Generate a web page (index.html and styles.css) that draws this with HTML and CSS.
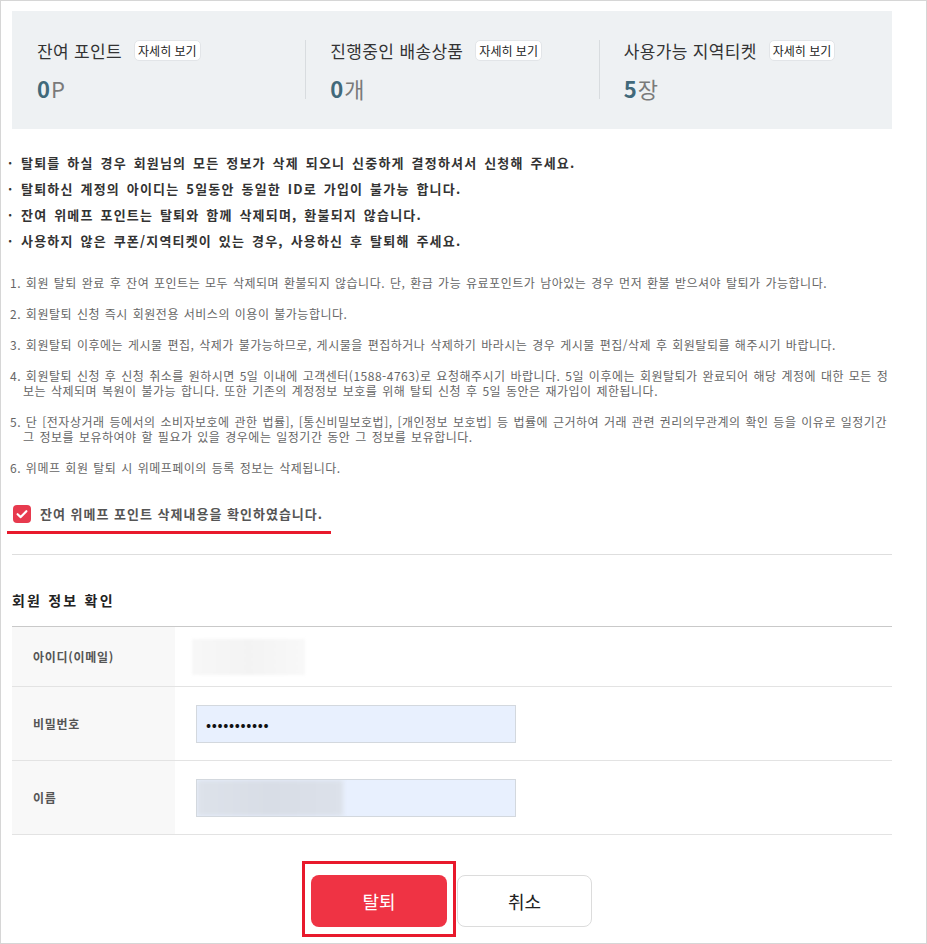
FILE: index.html
```html
<!DOCTYPE html>
<html lang="ko">
<head>
<meta charset="utf-8">
<title>회원 탈퇴</title>
<link rel="stylesheet" href="styles.css">
</head>
<body>
<div class="frame">
  <div class="main">
    <section class="summary">
      <div class="sum-col first">
        <div class="sum-title"><span>잔여 포인트</span><button class="badge">자세히 보기</button></div>
        <div class="sum-value"><strong>0</strong><span>P</span></div>
      </div>
      <div class="sum-col">
        <div class="sum-title"><span>진행중인 배송상품</span><button class="badge">자세히 보기</button></div>
        <div class="sum-value"><strong>0</strong><span>개</span></div>
      </div>
      <div class="sum-col">
        <div class="sum-title"><span>사용가능 지역티켓</span><button class="badge">자세히 보기</button></div>
        <div class="sum-value"><strong>5</strong><span>장</span></div>
      </div>
    </section>

    <ul class="notice">
      <li>탈퇴를 하실 경우 회원님의 모든 정보가 삭제 되오니 신중하게 결정하셔서 신청해 주세요.</li>
      <li>탈퇴하신 계정의 아이디는 5일동안 동일한 ID로 가입이 불가능 합니다.</li>
      <li>잔여 위메프 포인트는 탈퇴와 함께 삭제되며, 환불되지 않습니다.</li>
      <li>사용하지 않은 쿠폰/지역티켓이 있는 경우, 사용하신 후 탈퇴해 주세요.</li>
    </ul>

    <ol class="terms">
      <li>1. 회원 탈퇴 완료 후 잔여 포인트는 모두 삭제되며 환불되지 않습니다. 단, 환급 가능 유료포인트가 남아있는 경우 먼저 환불 받으셔야 탈퇴가 가능합니다.</li>
      <li>2. 회원탈퇴 신청 즉시 회원전용 서비스의 이용이 불가능합니다.</li>
      <li>3. 회원탈퇴 이후에는 게시물 편집, 삭제가 불가능하므로, 게시물을 편집하거나 삭제하기 바라시는 경우 게시물 편집/삭제 후 회원탈퇴를 해주시기 바랍니다.</li>
      <li>4. 회원탈퇴 신청 후 신청 취소를 원하시면 5일 이내에 고객센터(1588-4763)로 요청해주시기 바랍니다. 5일 이후에는 회원탈퇴가 완료되어 해당 계정에 대한 모든 정보는 삭제되며 복원이 불가능 합니다. 또한 기존의 계정정보 보호를 위해 탈퇴 신청 후 5일 동안은 재가입이 제한됩니다.</li>
      <li>5. 단 [전자상거래 등에서의 소비자보호에 관한 법률], [통신비밀보호법], [개인정보 보호법] 등 법률에 근거하여 거래 관련 권리의무관계의 확인 등을 이유로 일정기간 그 정보를 보유하여야 할 필요가 있을 경우에는 일정기간 동안 그 정보를 보유합니다.</li>
      <li>6. 위메프 회원 탈퇴 시 위메프페이의 등록 정보는 삭제됩니다.</li>
    </ol>

    <label class="agree">
      <svg class="check" width="18" height="18" viewBox="0 0 18 18" aria-hidden="true">
        <rect x="0" y="0" width="18" height="18" rx="4" fill="#e73a4e"/>
        <path d="M4.6 9.2 L7.7 12.1 L13.4 6.2" fill="none" stroke="#fff" stroke-width="2.2" stroke-linecap="round" stroke-linejoin="round"/>
      </svg>
      <span>잔여 위메프 포인트 삭제내용을 확인하였습니다.</span>
    </label>

    <hr class="divider">

    <h2 class="info-title">회원 정보 확인</h2>

    <div class="info-table">
      <div class="info-row short">
        <div class="info-label">아이디(이메일)</div>
        <div class="info-value"><div class="blur-id"></div></div>
      </div>
      <div class="info-row">
        <div class="info-label">비밀번호</div>
        <div class="info-value"><div class="field"><span class="dots">•••••••••••</span></div></div>
      </div>
      <div class="info-row">
        <div class="info-label">이름</div>
        <div class="info-value"><div class="field"><div class="blur-name"></div></div></div>
      </div>
    </div>

    <div class="actions">
      <div class="highlight"><button class="btn-leave">탈퇴</button></div>
      <button class="btn-cancel">취소</button>
    </div>
  </div>
</div>
</body>
</html>
```

FILE: styles.css
```css
body {
  margin: 0;
  font-family: "Noto Sans CJK KR", "Noto Sans", sans-serif;
  background: #fff;
}

.frame {
  width: 927px;
  height: 944px;
  box-sizing: border-box;
  border: 1px solid #d6d6d6;
  padding: 10px 34px 0 6px;
  overflow: hidden;
}

/* summary */
.summary {
  margin-left: 5px;
  background: #eef1f3;
  display: grid;
  grid-template-columns: repeat(3, 1fr);
  padding: 29px 0 30px;
}

.sum-col {
  height: 59px;
  box-sizing: border-box;
  padding-left: 24px;
  border-left: 1px solid #d8dcdf;
}

.sum-col.first {
  border-left: none;
  padding-left: 25px;
}

.sum-title {
  display: flex;
  align-items: center;
  gap: 12px;
  height: 21px;
  font-size: 17px;
  letter-spacing: 0.35px;
  color: #333;
}

.badge {
  height: 21px;
  padding: 0 3px;
  border: 1px solid #e2e5e8;
  border-radius: 5px;
  background: #fff;
  font-family: inherit;
  font-size: 12px;
  letter-spacing: 0;
  color: #222;
  line-height: 19px;
}

.sum-value {
  margin-top: 16px;
  height: 22px;
  line-height: 22px;
  font-size: 22px;
}

.sum-value strong {
  color: #41697a;
  font-weight: 700;
  margin-right: 1px;
}

.sum-value span {
  color: #7a7a7a;
  font-weight: 400;
}

/* notices */
.notice {
  list-style: none;
  margin: 21px 0 0;
  padding: 0 0 0 1px;
  font-size: 13px;
  font-weight: 700;
  line-height: 26px;
  letter-spacing: 1.2px;
  word-spacing: 2px;
  color: #333;
}

.notice li::before {
  content: "·";
  display: inline-block;
  width: 13px;
}

.terms {
  list-style: none;
  margin: 21px -2px 0 0;
  padding: 0 0 0 3px;
  font-size: 12px;
  line-height: 15px;
  letter-spacing: 0.5px;
  word-spacing: 1px;
  word-break: break-all;
  color: #666;
}

.terms li {
  margin-bottom: 16px;
  padding-left: 13px;
  text-indent: -13px;
}

.terms li:last-child {
  margin-bottom: 0;
}

/* agree */
.agree {
  display: flex;
  width: fit-content;
  align-items: center;
  gap: 9px;
  margin-top: 30px;
  padding: 0 8px 8px 6px;
  border-bottom: 3px solid #e8192c;
  font-size: 13px;
  font-weight: 700;
  letter-spacing: 1px;
  color: #555;
  line-height: 18px;
}

.check {
  display: block;
  flex: none;
}

.divider {
  margin: 20px 0 0 5px;
  border: 0;
  border-top: 1px solid #dedede;
  height: 0;
}

.info-title {
  margin: 35px 0 0 5px;
  font-size: 14px;
  line-height: 20px;
  font-weight: 700;
  letter-spacing: 2.2px;
  color: #222;
}

/* table */
.info-table {
  margin: 16px 0 0 5px;
  border-top: 1px solid #c9c9c9;
}

.info-row {
  display: grid;
  grid-template-columns: 163px 1fr;
  height: 74px;
  box-sizing: border-box;
  border-bottom: 1px solid #e3e3e3;
}

.info-row.short {
  height: 60px;
}

.info-label {
  display: flex;
  align-items: center;
  padding-left: 21px;
  background: #f8f8f8;
  font-size: 12px;
  font-weight: 700;
  color: #555;
  letter-spacing: 0.7px;
}

.info-value {
  display: flex;
  align-items: center;
  padding-left: 21px;
}

.blur-id {
  margin-left: -4px;
  width: 113px;
  height: 36px;
  background: linear-gradient(90deg, #f7f7f7, #f3f3f3 50%, #f8f8f8);
  filter: blur(1.5px);
}

.field {
  width: 320px;
  height: 38px;
  box-sizing: border-box;
  border: 1px solid #d3d8de;
  background: #e8f0fe;
  display: flex;
  align-items: center;
  overflow: hidden;
}

.dots {
  padding-left: 9px;
  font-size: 15px;
  letter-spacing: 0.65px;
  color: #111;
}

.blur-name {
  width: 146px;
  height: 100%;
  background: linear-gradient(90deg, #dde2ea, #d8dde6 50%, #dce1ea);
  filter: blur(2px);
}

/* actions */
.actions {
  display: flex;
  justify-content: center;
  align-items: flex-start;
  margin: 26px 0 0 5px;
  padding-right: 10px;
}

.highlight {
  border: 3px solid #e8192c;
  padding: 11px 6px 7px 6px;
}

.btn-leave,
.btn-cancel {
  display: block;
  height: 52px;
  border-radius: 8px;
  font-family: inherit;
  font-size: 18px;
}

.btn-leave {
  width: 136px;
  border: none;
  background: #ef3344;
  color: #fff;
}

.btn-cancel {
  width: 135px;
  margin: 14px 0 0 1px;
  border: 1px solid #dcdcdc;
  background: #fff;
  color: #222;
}
```
